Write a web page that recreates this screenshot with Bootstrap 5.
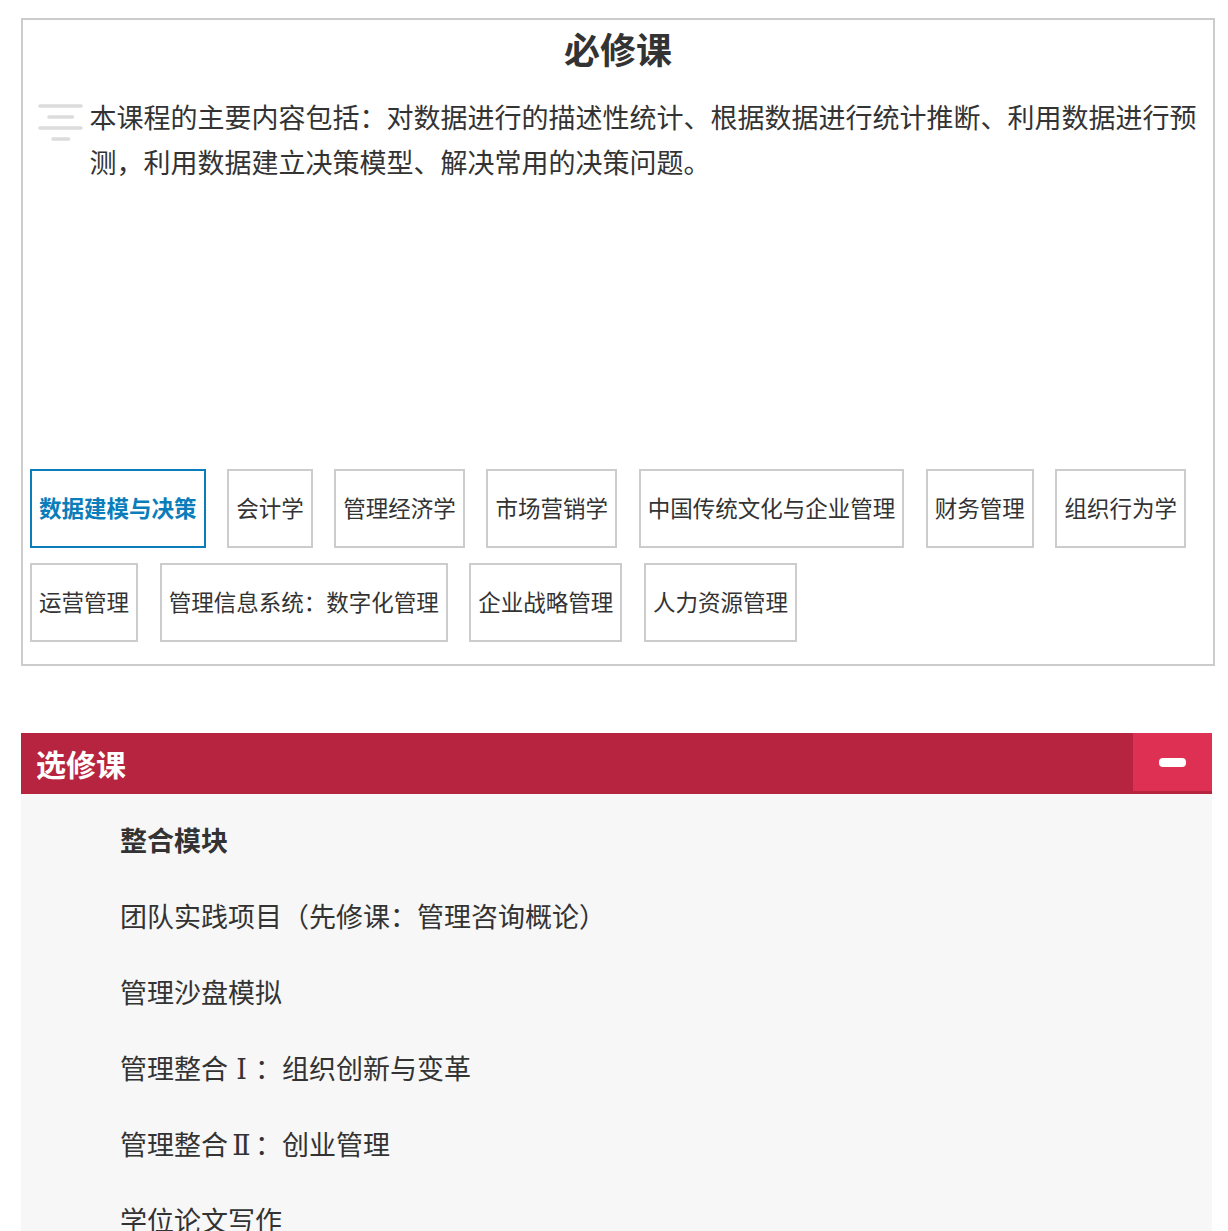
<!DOCTYPE html>
<html lang="zh-CN">
<head>
<meta charset="utf-8">
<title>课程</title>
<link href="https://cdn.jsdelivr.net/npm/bootstrap@5.3.0/dist/css/bootstrap.min.css" rel="stylesheet">
<style>
html,body{height:1231px;overflow:hidden;}
body{background:#fff;color:#333;font-family:"Liberation Sans","Noto Sans CJK SC",sans-serif;}
.page-wrap{padding:18px 13px 0 21px;}
.req-box{border:2px solid #ccc;height:648px;}
.req-title{font-size:36px;font-weight:700;line-height:64px;height:62px;margin:0;text-align:center;color:#333;}
.req-desc{height:387px;padding:15px 15px 0 15px;font-size:27px;line-height:45px;}
.desc-icon{float:left;width:45px;height:38px;margin:7px 6.5px 2px 0;filter:blur(.4px);}
.tag-row{display:flex;flex-wrap:wrap;gap:15px 21.65px;padding:0 7px;}
.tag-item{border:2px solid #ccc;height:79px;padding:3px 7px 0;font-size:22.5px;line-height:72px;color:#333;text-decoration:none;}
.tag-item.on{border-color:#0a7dba;color:#0a7dba;font-weight:700;}
.elect-head{margin-top:67px;background:#b7243f;height:61px;margin-right:3px;align-items:flex-start;}
.elect-title{font-size:30px;font-weight:700;color:#fff;line-height:61px;padding:2px 0 0 15px;}
.elect-btn{width:79px;height:58px;background:#dd3052;border:0;border-radius:0;padding:0;}
.minus-bar{display:block;width:27px;height:9px;background:#fff;border-radius:4px;margin:0 auto;filter:blur(.4px);}
.elect-body{background:#f7f7f7;margin-right:3px;height:437px;padding:10px 0 0 99px;font-size:27px;}
.elect-body p{margin:0;line-height:76px;}
.elect-body p.hd{font-weight:700;}
.roman-num{font-family:"DejaVu Serif",serif;display:inline-block;width:27px;text-align:center;}
</style>
</head>
<body>
<div class="page-wrap">
  <section class="req-box">
    <h2 class="req-title">必修课</h2>
    <div class="req-desc">
      <svg class="desc-icon" viewBox="0 0 45 38" aria-hidden="true"><g stroke="#dcdcdc" stroke-width="3.6" stroke-linecap="round"><path d="M2 2H43"/><path d="M11 13H34.5"/><path d="M2 24H43"/><path d="M15 35H30.5"/></g></svg>
      本课程的主要内容包括：对数据进行的描述性统计、根据数据进行统计推断、利用数据进行预测，利用数据建立决策模型、解决常用的决策问题。
    </div>
    <div class="tag-row">
      <a class="tag-item on" href="#">数据建模与决策</a>
      <a class="tag-item" href="#">会计学</a>
      <a class="tag-item" href="#">管理经济学</a>
      <a class="tag-item" href="#">市场营销学</a>
      <a class="tag-item" href="#">中国传统文化与企业管理</a>
      <a class="tag-item" href="#">财务管理</a>
      <a class="tag-item" href="#">组织行为学</a>
      <a class="tag-item" href="#">运营管理</a>
      <a class="tag-item" href="#">管理信息系统：数字化管理</a>
      <a class="tag-item" href="#">企业战略管理</a>
      <a class="tag-item" href="#">人力资源管理</a>
    </div>
  </section>
  <div class="elect-head d-flex justify-content-between">
    <div class="elect-title">选修课</div>
    <button class="btn elect-btn" type="button" aria-label="收起"><span class="minus-bar"></span></button>
  </div>
  <div class="elect-body">
    <p class="hd">整合模块</p>
    <p>团队实践项目（先修课：管理咨询概论）</p>
    <p>管理沙盘模拟</p>
    <p>管理整合<span class="roman-num">Ⅰ</span>：组织创新与变革</p>
    <p>管理整合<span class="roman-num">Ⅱ</span>：创业管理</p>
    <p>学位论文写作</p>
  </div>
</div>
<script src="https://cdn.jsdelivr.net/npm/bootstrap@5.3.0/dist/js/bootstrap.bundle.min.js"></script>
</body>
</html>
